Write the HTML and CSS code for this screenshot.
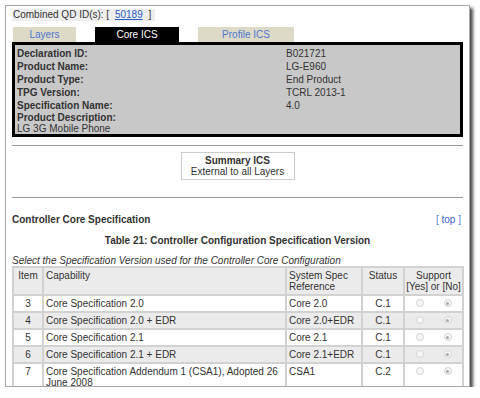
FILE: index.html
```html
<!DOCTYPE html>
<html lang="en">
<head>
  <meta charset="UTF-8">
  <title>Core ICS</title>
  <link rel="stylesheet" href="styles.css">
</head>
<body>
  <div class="window">
    <div class="qd-line">
      <span class="qd">Combined QD ID(s): [ <a href="#" class="qd-link">50189</a> ]</span>
    </div>
    <!-- Tabs -->
    <div class="tabs">
      <span class="tab tab-layers">Layers</span>
      <span class="tab tab-active">Core ICS</span>
      <span class="tab tab-profile">Profile ICS</span>
    </div>
    <div class="info-box">
      <div class="info-row"><span class="label">Declaration ID:</span><span>B021721</span></div>
      <div class="info-row"><span class="label">Product Name:</span><span>LG-E960</span></div>
      <div class="info-row"><span class="label">Product Type:</span><span>End Product</span></div>
      <div class="info-row"><span class="label">TPG Version:</span><span>TCRL 2013-1</span></div>
      <div class="info-row"><span class="label">Specification Name:</span><span>4.0</span></div>
      <div class="info-desc">
        <b>Product Description:</b><br>
        LG 3G Mobile Phone
      </div>
    </div>
    <hr class="rule">
    <div class="summary">
      <b>Summary ICS</b><br>
      External to all Layers
    </div>
    <hr class="rule rule-low">
    <div class="section-head">
      <b>Controller Core Specification</b>
      <span class="top-link">[ <a href="#">top</a> ]</span>
    </div>
    <div class="table-title">Table 21: Controller Configuration Specification Version</div>
    <div class="table-note">Select the Specification Version used for the Controller Core Configuration</div>
    <table class="spec-table">
      <tr class="head">
        <td class="c-item">Item</td>
        <td class="c-cap">Capability</td>
        <td class="c-ref">System Spec<br>Reference</td>
        <td class="c-status">Status</td>
        <td class="c-support">Support<br>[Yes] or [No]</td>
      </tr>
      <tr>
        <td class="c-item">3</td>
        <td>Core Specification 2.0</td>
        <td>Core 2.0</td>
        <td class="c-status">C.1</td>
        <td class="c-support"><span class="radio"></span><span class="radio checked"></span></td>
      </tr>
      <tr class="alt">
        <td class="c-item">4</td>
        <td>Core Specification 2.0 + EDR</td>
        <td>Core 2.0+EDR</td>
        <td class="c-status">C.1</td>
        <td class="c-support"><span class="radio"></span><span class="radio checked"></span></td>
      </tr>
      <tr>
        <td class="c-item">5</td>
        <td>Core Specification 2.1</td>
        <td>Core 2.1</td>
        <td class="c-status">C.1</td>
        <td class="c-support"><span class="radio"></span><span class="radio checked"></span></td>
      </tr>
      <tr class="alt">
        <td class="c-item">6</td>
        <td>Core Specification 2.1 + EDR</td>
        <td>Core 2.1+EDR</td>
        <td class="c-status">C.1</td>
        <td class="c-support"><span class="radio"></span><span class="radio checked"></span></td>
      </tr>
      <tr>
        <td class="c-item">7</td>
        <td>Core Specification Addendum 1 (CSA1), Adopted 26 June 2008</td>
        <td>CSA1</td>
        <td class="c-status">C.2</td>
        <td class="c-support"><span class="radio"></span><span class="radio checked"></span></td>
      </tr>
    </table>
  </div>
</body>
</html>
```
FILE: styles.css
```css
body {
  margin: 0;
  background-color: #ffffff;
  font-family: 'Liberation Sans', Arial, sans-serif;
  font-size: 10px;
  color: #333333;
}
.window {
  margin: 5px 0 0 5px;
  width: 465px;
  height: 382px;
  border: 1px solid #a8a8a8;
  box-shadow: 3px 3px 3px rgba(0, 0, 0, 0.7);
  padding: 3px 6px 0 6px;
  box-sizing: border-box;
  overflow: hidden;
  background-color: #ffffff;
}
.qd-line {
  line-height: 12px;
  height: 12px;
}
.qd {
  display: inline-block;
  background-color: #eeeeee;
  padding: 0 4px 0 1px;
}
.qd-link {
  color: #2a5cc4;
  margin: 0 3px;
}
.tabs {
  display: flex;
  gap: 19px;
  margin-top: 6px;
  height: 15px;
  line-height: 15px;
}
.tab {
  text-align: center;
  color: #4f74d0;
  background-color: #dddbc8;
}
.tab-layers {
  width: 63px;
  margin-left: 1px;
}
.tab-active {
  width: 84px;
  background-color: #000000;
  color: #ffffff;
}
.tab-profile {
  width: 96px;
}
.info-box {
  border: 3px solid #000000;
  background-color: #c8c8c8;
  padding: 2px 0 0 2px;
  height: 95px;
  box-sizing: border-box;
}
.info-row {
  display: flex;
  height: 13px;
  line-height: 13px;
}
.info-row .label {
  width: 269px;
  font-weight: bold;
}
.info-desc {
  line-height: 11px;
}
.rule {
  border: none;
  border-top: 1px solid #9a9a9a;
  margin: 8px 0 0 0;
  height: 0;
}
.rule-low {
  margin-top: 17px;
}
.summary {
  width: 112px;
  margin: 6px auto 0;
  border: 1px solid #cccccc;
  padding: 2px 0;
  line-height: 11px;
  text-align: center;
}
.section-head {
  display: flex;
  justify-content: space-between;
  margin-top: 16px;
  line-height: 12px;
}
.top-link {
  color: #5b7fd6;
  margin-right: 2px;
}
.top-link a {
  color: #3a66d0;
  text-decoration: none;
}
.table-title {
  margin-top: 9px;
  line-height: 12px;
  text-align: center;
  font-weight: bold;
}
.table-note {
  margin-top: 9px;
  line-height: 10px;
  font-style: italic;
}
.spec-table {
  width: 452px;
  border-spacing: 2px;
  background-color: #d2d2d2;
  table-layout: fixed;
  margin-top: 0;
}
.spec-table td {
  background-color: #ffffff;
  padding: 2px 2px;
  line-height: 11px;
  vertical-align: top;
  color: #333333;
}
.spec-table tr.alt td,
.spec-table tr.head td {
  background-color: #ebebeb;
}
.spec-table tr.head td {
  height: 19px;
  padding-top: 2px;
}
.c-item {
  width: 24px;
  text-align: center;
}
.c-cap {
  width: 237px;
}
.c-ref {
  width: 70px;
}
.c-status {
  width: 36px;
  text-align: center;
}
.spec-table td.c-support {
  width: 57px;
  padding-left: 0;
  padding-right: 0;
  text-align: center;
  white-space: nowrap;
}
.radio {
  display: inline-block;
  width: 8px;
  height: 8px;
  border: 1px solid #d4d4d4;
  border-radius: 50%;
  background-color: #f6f6f6;
  box-sizing: border-box;
  margin: 1px 10px 0;
  position: relative;
  vertical-align: top;
}
.radio.checked::after {
  content: '';
  position: absolute;
  left: 1.5px;
  top: 1.5px;
  width: 3px;
  height: 3px;
  border-radius: 50%;
  background-color: #a8a8a8;
}
```
